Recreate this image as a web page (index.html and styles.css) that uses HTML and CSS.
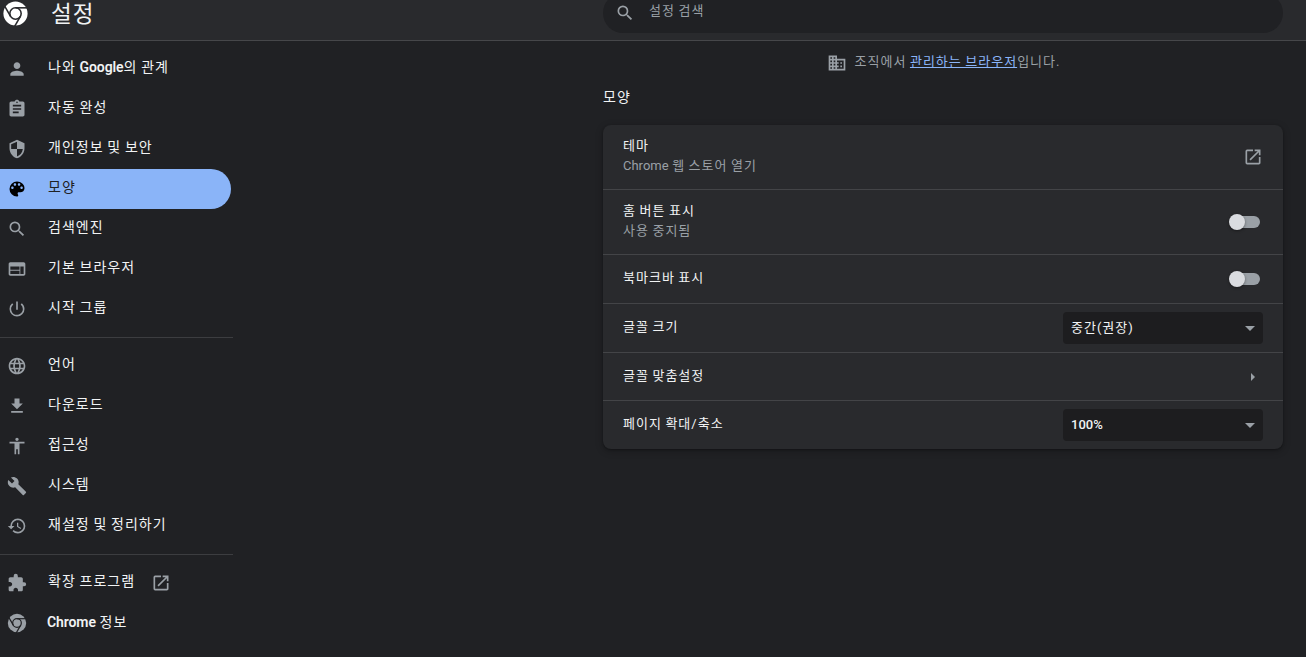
FILE: index.html
```html
<!DOCTYPE html>
<html lang="ko">
<head>
    <meta charset="UTF-8">
    <title>설정</title>
    <link rel="stylesheet" href="styles.css">
</head>
<body>
    <svg class="defs">
        <mask id="chromeGaps">
            <rect width="24" height="24" fill="#fff"/>
            <g fill="none" stroke="#000" stroke-width="1.3">
                <circle cx="12" cy="12" r="4.7"/>
                <path d="M12 7.3h11"/>
                <path d="M12 7.3h11" transform="rotate(120 12 12)"/>
                <path d="M12 7.3h11" transform="rotate(240 12 12)"/>
            </g>
        </mask>
        <symbol id="chrome" viewBox="0 0 24 24">
            <circle cx="12" cy="12" r="10" mask="url(#chromeGaps)"/>
        </symbol>
        <symbol id="search" viewBox="0 0 24 24">
            <path d="M15.5 14h-.79l-.28-.27A6.471 6.471 0 0 0 16 9.5 6.5 6.5 0 1 0 9.5 16c1.61 0 3.09-.59 4.23-1.57l.27.28v.79l5 4.99L20.49 19l-4.99-5zm-6 0C7.01 14 5 11.99 5 9.5S7.01 5 9.5 5 14 7.01 14 9.5 11.99 14 9.5 14z"/>
        </symbol>
        <symbol id="launch" viewBox="0 0 24 24">
            <path d="M19 19H5V5h7V3H5a2 2 0 0 0-2 2v14a2 2 0 0 0 2 2h14c1.1 0 2-.9 2-2v-7h-2v7zM14 3v2h3.59l-9.83 9.83 1.41 1.41L19 6.41V10h2V3h-7z"/>
        </symbol>
    </svg>

    <header class="toolbar">
        <svg class="logo"><use href="#chrome"/></svg>
        <h1>설정</h1>
        <div class="search-box">
            <svg class="icon"><use href="#search"/></svg>
            <span>설정 검색</span>
        </div>
    </header>

    <div class="container">
        <nav class="menu">
            <a class="item">
                <svg class="icon" viewBox="0 0 24 24"><path d="M12 12c2.21 0 4-1.79 4-4s-1.79-4-4-4-4 1.79-4 4 1.79 4 4 4zm0 2c-2.67 0-8 1.34-8 4v2h16v-2c0-2.66-5.33-4-8-4z"/></svg>
                <span>나와 <b>Google</b>의 관계</span>
            </a>
            <a class="item">
                <svg class="icon" viewBox="0 0 24 24"><path d="M19 3h-4.18C14.4 1.84 13.3 1 12 1c-1.3 0-2.4.84-2.82 2H5c-1.1 0-2 .9-2 2v14c0 1.1.9 2 2 2h14c1.1 0 2-.9 2-2V5c0-1.1-.9-2-2-2zm-7 0c.55 0 1 .45 1 1s-.45 1-1 1-1-.45-1-1 .45-1 1-1zm2 14H7v-2h7v2zm3-4H7v-2h10v2zm0-4H7V7h10v2z"/></svg>
                <span>자동 완성</span>
            </a>
            <a class="item">
                <svg class="icon" viewBox="0 0 24 24"><path d="M12 1L3 5v6c0 5.55 3.84 10.74 9 12 5.16-1.26 9-6.45 9-12V5l-9-4zm0 10.99h7c-.53 4.12-3.28 7.79-7 8.94V12H5V6.3l7-3.11v8.8z"/></svg>
                <span>개인정보 및 보안</span>
            </a>
            <a class="item selected">
                <svg class="icon" viewBox="0 0 24 24"><path d="M12 3a9 9 0 0 0 0 18c.83 0 1.5-.67 1.5-1.5 0-.39-.15-.74-.39-1.01-.23-.26-.38-.61-.38-.99 0-.83.67-1.5 1.5-1.5H16c2.76 0 5-2.24 5-5 0-4.42-4.03-8-9-8zm-5.5 9c-.83 0-1.5-.67-1.5-1.5S5.67 9 6.5 9 8 9.67 8 10.5 7.33 12 6.5 12zm3-4C8.67 8 8 7.33 8 6.5S8.67 5 9.5 5s1.5.67 1.5 1.5S10.33 8 9.5 8zm5 0c-.83 0-1.5-.67-1.5-1.5S13.67 5 14.5 5s1.5.67 1.5 1.5S15.33 8 14.5 8zm3 4c-.83 0-1.5-.67-1.5-1.5S16.67 9 17.5 9s1.5.67 1.5 1.5-.67 1.5-1.5 1.5z"/></svg>
                <span>모양</span>
            </a>
            <a class="item">
                <svg class="icon"><use href="#search"/></svg>
                <span>검색엔진</span>
            </a>
            <a class="item">
                <svg class="icon" viewBox="0 0 24 24"><path d="M20 4H4c-1.1 0-1.99.9-1.99 2L2 18c0 1.1.9 2 2 2h16c1.1 0 2-.9 2-2V6c0-1.1-.9-2-2-2zm-5 14H4v-4h11v4zm0-5H4V9h11v4zm5 5h-4V9h4v9z"/></svg>
                <span>기본 브라우저</span>
            </a>
            <a class="item">
                <svg class="icon" viewBox="0 0 24 24"><path d="M13 3h-2v10h2V3zm4.83 2.17l-1.42 1.42A6.92 6.92 0 0 1 19 12c0 3.87-3.13 7-7 7A6.995 6.995 0 0 1 7.58 6.58L6.17 5.17A8.932 8.932 0 0 0 3 12a9 9 0 0 0 18 0c0-2.74-1.23-5.18-3.17-6.83z"/></svg>
                <span>시작 그룹</span>
            </a>
            <div class="separator"></div>
            <a class="item">
                <svg class="icon" viewBox="0 0 24 24"><path d="M11.99 2C6.47 2 2 6.48 2 12s4.47 10 9.99 10C17.52 22 22 17.52 22 12S17.52 2 11.99 2zm6.93 6h-2.95a15.65 15.65 0 0 0-1.38-3.56A8.03 8.03 0 0 1 18.92 8zM12 4.04c.83 1.2 1.48 2.53 1.91 3.96h-3.82c.43-1.43 1.08-2.76 1.91-3.96zM4.26 14C4.1 13.36 4 12.69 4 12s.1-1.36.26-2h3.38c-.08.66-.14 1.32-.14 2 0 .68.06 1.34.14 2H4.26zm.82 2h2.95c.32 1.25.78 2.45 1.38 3.56A7.987 7.987 0 0 1 5.08 16zm2.95-8H5.08a7.987 7.987 0 0 1 4.33-3.56A15.65 15.65 0 0 0 8.03 8zM12 19.96c-.83-1.2-1.48-2.53-1.91-3.96h3.82c-.43 1.43-1.08 2.76-1.91 3.96zM14.34 14H9.66c-.09-.66-.16-1.32-.16-2 0-.68.07-1.35.16-2h4.68c.09.65.16 1.32.16 2 0 .68-.07 1.34-.16 2zm.25 5.56c.6-1.11 1.06-2.31 1.38-3.56h2.95a8.03 8.03 0 0 1-4.33 3.56zM16.36 14c.08-.66.14-1.32.14-2 0-.68-.06-1.34-.14-2h3.38c.16.64.26 1.31.26 2s-.1 1.36-.26 2h-3.38z"/></svg>
                <span>언어</span>
            </a>
            <a class="item">
                <svg class="icon" viewBox="0 0 24 24"><path d="M19 9h-4V3H9v6H5l7 7 7-7zM5 18v2h14v-2H5z"/></svg>
                <span>다운로드</span>
            </a>
            <a class="item">
                <svg class="icon" viewBox="0 0 24 24"><path d="M12 2c1.1 0 2 .9 2 2s-.9 2-2 2-2-.9-2-2 .9-2 2-2zm9 7h-6v13h-2v-6h-2v6H9V9H3V7h18v2z"/></svg>
                <span>접근성</span>
            </a>
            <a class="item">
                <svg class="icon" viewBox="0 0 24 24"><path d="M22.7 19l-9.1-9.1c.9-2.3.4-5-1.5-6.9-2-2-5-2.4-7.4-1.3L9 6 6 9 1.6 4.7C.4 7.1.9 10.1 2.9 12.1c1.9 1.9 4.6 2.4 6.9 1.5l9.1 9.1c.4.4 1 .4 1.4 0l2.3-2.3c.5-.4.5-1.1.1-1.4z"/></svg>
                <span>시스템</span>
            </a>
            <a class="item">
                <svg class="icon" viewBox="0 0 24 24"><path d="M13 3a9 9 0 0 0-9 9H1l3.89 3.89.07.14L9 12H6c0-3.87 3.13-7 7-7s7 3.13 7 7-3.13 7-7 7c-1.93 0-3.68-.79-4.94-2.06l-1.42 1.42A8.954 8.954 0 0 0 13 21a9 9 0 0 0 0-18zm-1 5v5l4.28 2.54.72-1.21-3.5-2.08V8H12z"/></svg>
                <span>재설정 및 정리하기</span>
            </a>
            <div class="separator"></div>
            <a class="item">
                <svg class="icon" viewBox="0 0 24 24"><path d="M20.5 11H19V7c0-1.1-.9-2-2-2h-4V3.5a2.5 2.5 0 0 0-5 0V5H4c-1.1 0-1.99.9-1.99 2v3.8H3.5c1.49 0 2.7 1.21 2.7 2.7s-1.21 2.7-2.7 2.7H2V20c0 1.1.9 2 2 2h3.8v-1.5c0-1.49 1.21-2.7 2.7-2.7 1.49 0 2.7 1.21 2.7 2.7V22H17c1.1 0 2-.9 2-2v-4h1.5a2.5 2.5 0 0 0 0-5z"/></svg>
                <span>확장 프로그램</span>
                <svg class="icon external"><use href="#launch"/></svg>
            </a>
            <a class="item latin-first">
                <svg class="icon chrome"><use href="#chrome"/></svg>
                <span><b>Chrome</b> 정보</span>
            </a>
        </nav>

        <main class="main">
            <div class="managed">
                <svg class="icon" viewBox="0 0 24 24"><path d="M12 7V3H2v18h20V7H12zM6 19H4v-2h2v2zm0-4H4v-2h2v2zm0-4H4V9h2v2zm0-4H4V5h2v2zm4 12H8v-2h2v2zm0-4H8v-2h2v2zm0-4H8V9h2v2zm0-4H8V5h2v2zm10 12h-8v-2h2v-2h-2v-2h2v-2h-2V9h8v10zm-2-8h-2v2h2v-2zm0 4h-2v2h2v-2z"/></svg>
                <span>조직에서 <a href="#">관리하는 브라우저</a>입니다.</span>
            </div>
            <h2>모양</h2>
            <div class="card">
                <div class="row two-line">
                    <div class="label">테마<div class="sub"><i>Chrome</i> 웹 스토어 열기</div></div>
                    <svg class="icon open"><use href="#launch"/></svg>
                </div>
                <div class="row two-line">
                    <div class="label">홈 버튼 표시<div class="sub">사용 중지됨</div></div>
                    <div class="toggle"></div>
                </div>
                <div class="row">
                    <div class="label">북마크바 표시</div>
                    <div class="toggle"></div>
                </div>
                <div class="row">
                    <div class="label">글꼴 크기</div>
                    <div class="select"><span>중간(권장)</span></div>
                </div>
                <div class="row short">
                    <div class="label">글꼴 맞춤설정</div>
                    <div class="arrow-right"></div>
                </div>
                <div class="row">
                    <div class="label">페이지 확대/축소</div>
                    <div class="select"><span class="latin">100%</span></div>
                </div>
            </div>
        </main>
    </div>
</body>
</html>
```
FILE: styles.css
```css
body {
    margin: 0;
    height: 657px;
    overflow: hidden;
    background-color: #202124;
    color: #f1f3f4;
    font-family: Roboto, "Noto Sans CJK KR", sans-serif;
    font-size: 13px;
    line-height: 20px;
    letter-spacing: 1px;
    word-spacing: -0.7px;
}

b, i, .latin {
    font-style: normal;
    font-weight: 500;
    letter-spacing: 0;
}

b {
    font-weight: 600;
    letter-spacing: -0.1px;
}

i {
    font-weight: 400;
    letter-spacing: 0;
}

.defs {
    position: absolute;
    width: 0;
    height: 0;
}

.icon {
    width: 20px;
    height: 20px;
    flex: none;
    fill: #9aa0a6;
}

/* the toolbar is scrolled partly out of the window */
.toolbar {
    display: flex;
    align-items: center;
    height: 56px;
    margin-top: -16px;
    border-bottom: 1px solid #46474a;
    background-color: #292a2d;
}

.logo {
    width: 29px;
    height: 29px;
    margin: 2px 0 0 1px;
    fill: #fff;
    flex: none;
}

.toolbar h1 {
    width: 552px;
    margin: 3px 0 0 21px;
    flex: none;
    font-size: 22.5px;
    font-weight: 400;
    line-height: 32px;
}

.search-box {
    display: flex;
    align-items: center;
    box-sizing: border-box;
    width: 680px;
    height: 40px;
    margin-top: 2px;
    padding-left: 12px;
    border-radius: 20px;
    background-color: #202124;
    color: #9aa0a6;
}

.search-box span {
    margin: -4px 0 0 14px;
}

.container {
    display: flex;
}

.menu {
    width: 233px;
    padding-top: 8px;
    margin-right: 370px;
    flex: none;
    font-size: 14px;
}

.item {
    display: flex;
    align-items: center;
    box-sizing: border-box;
    width: 231px;
    height: 40px;
    padding-left: 7px;
    border-radius: 0 20px 20px 0;
}

.item span {
    margin: -4px 0 0 21px;
}

.item.latin-first span {
    margin: -3px 0 0 20px;
}

.item.selected {
    background-color: #8ab4f8;
    color: #202124;
}

.item.selected .icon {
    fill: #000;
}

.item .icon.chrome {
    width: 22px;
    height: 22px;
    margin: 0 -1px;
}

.item .external {
    margin-left: 16px;
}

.separator {
    height: 1px;
    margin: 8px 0;
    background-color: #3c3d40;
}

.main {
    width: 680px;
}

.managed {
    display: flex;
    align-items: center;
    justify-content: center;
    height: 20px;
    padding: 12px 0 0 1px;
    color: #9aa0a6;
}

.managed span {
    margin: -2px 0 0 8px;
}

.managed a {
    color: #8ab4f8;
}

h2 {
    margin: 14px 0 18px;
    font-size: 14px;
    font-weight: 400;
    line-height: 20px;
}

.card {
    border-radius: 8px;
    background-color: #292a2d;
    box-shadow: 0 1px 2px rgba(0,0,0,0.3), 0 2px 6px 2px rgba(0,0,0,0.15);
}

.row {
    display: flex;
    align-items: center;
    justify-content: space-between;
    box-sizing: border-box;
    height: 49px;
    padding: 0 20px;
    border-bottom: 1px solid #434447;
}

.row.two-line {
    height: 65px;
}

.row.short {
    height: 48px;
}

.row:last-child {
    height: 48px;
    border-bottom: none;
}

.label {
    margin-top: -2px;
}

.sub {
    color: #9aa0a6;
}

.open {
    fill: #9aa0a6;
}

.toggle {
    position: relative;
    width: 28px;
    height: 12px;
    margin-right: 3px;
    border-radius: 6px;
    background-color: #9aa0a6;
}

.toggle::before {
    content: "";
    position: absolute;
    top: -2px;
    left: -3px;
    width: 16px;
    height: 16px;
    border-radius: 50%;
    background-color: #dadce0;
    box-shadow: 0 1px 3px rgba(0,0,0,0.4);
}

.select {
    display: flex;
    align-items: center;
    justify-content: space-between;
    box-sizing: border-box;
    width: 200px;
    height: 32px;
    padding: 0 8px;
    border-radius: 4px;
    background-color: #1d1d1f;
}

.select::after {
    content: "";
    border: 5px solid transparent;
    border-top-color: #9aa0a6;
    border-bottom: 0;
}

.arrow-right {
    margin-right: 8px;
    border: 4.5px solid transparent;
    border-left-color: #9aa0a6;
    border-right: 0;
}
```
